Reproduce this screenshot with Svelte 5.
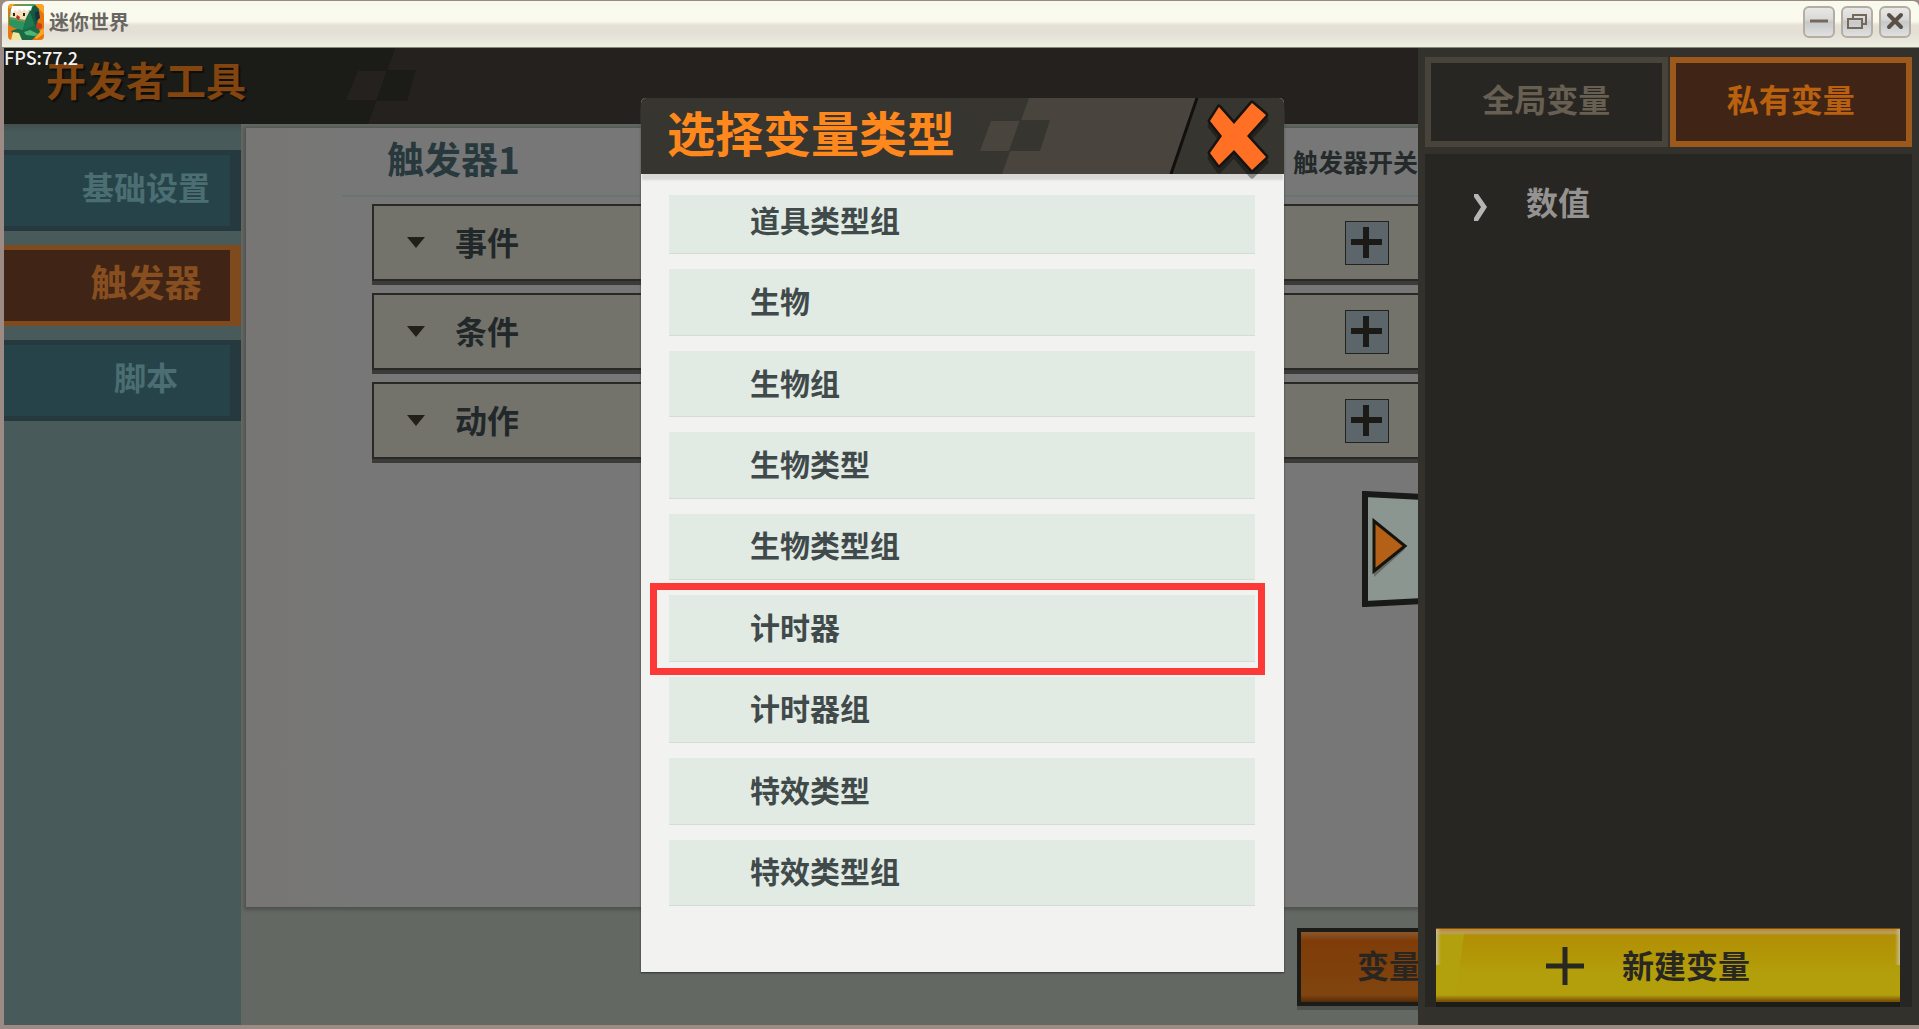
<script>
    let menu = [
        { label: '基础设置', active: false },
        { label: '触发器', active: true },
        { label: '脚本', active: false },
    ];

    let sections = ['事件', '条件', '动作'];

    let types = [
        '道具类型组',
        '生物',
        '生物组',
        '生物类型',
        '生物类型组',
        '计时器',
        '计时器组',
        '特效类型',
        '特效类型组',
    ];

    let marked = '计时器';
</script>

<div class="window">
    <header class="titlebar">
        <svg class="logo" viewBox="0 0 36 36" aria-hidden="true">
            <defs>
                <clipPath id="round"><rect width="36" height="36" rx="4" /></clipPath>
            </defs>
            <g clip-path="url(#round)">
                <rect width="36" height="36" fill="#e8760c" />
                <path d="M26 0h10v10zM0 0h7L1 5zM26 31l10-7v6l-8 5z" fill="#f9a52c" />
                <path d="M14 23l15-3 3 8-8 8H9l-6-9z" fill="#1c6a45" />
                <path d="M22 3l5-2 4 4-2 17-15 4z" fill="#15583f" />
                <path d="M4 4L6 1l21-1-4 5-6 12-16-2 1-9z" fill="#39a56d" />
                <path d="M3 5l20-1-6 12-15-3z" fill="#f6dfba" />
                <path d="M4 2h20l-1 5-2-2-2 3-3-3-2 3-2-3-3 3-2-2-3 3-1-3z" fill="#fff" />
                <path d="M1 15l16 3-2 8-9-2-5-3z" fill="#2a9562" />
                <path d="M17 18l5-10 5 14-12 4z" fill="#1d7a50" />
                <path d="M5 9h2v3H5zM15 9h2v3h-2z" fill="#2b2320" />
                <path d="M9 11l3 2-1 3-3-2z" fill="#c5281d" />
                <path d="M27 8l4-1 1 7-4 3z" fill="#152f45" />
                <circle cx="31" cy="22" r="3" fill="#cc3d1f" />
                <path d="M5 28l6 1 3 7H3z" fill="#efe4a0" />
                <path d="M16 28l6-2 8 4-3 2-9-1z" fill="#4db672" />
            </g>
        </svg>
        <h1>迷你世界</h1>
        <div class="window-buttons">
            <button aria-label="最小化">
                <svg viewBox="0 0 28 28"><path d="M5 13h18" stroke="#75685a" stroke-width="3" /></svg>
            </button>
            <button aria-label="还原">
                <svg viewBox="0 0 28 28" fill="none" stroke="#75685a">
                    <path d="M10 10V7h13v9h-4" stroke-width="2" />
                    <path d="M5 11h14v9H5z" stroke-width="2" />
                </svg>
            </button>
            <button aria-label="关闭">
                <svg viewBox="0 0 28 28"><path d="M8 7l12 12M20 7L8 19" stroke="#5a5048" stroke-width="4" stroke-linecap="round" /></svg>
            </button>
        </div>
    </header>

    <div class="game">
        <span class="fps">FPS:77.2</span>

        <div class="workspace">
            <div class="tool-header">
                <svg class="deco" viewBox="0 0 1070 76" aria-hidden="true">
                    <path d="M47 0H1070V76H20z" fill="#24211e" />
                    <path d="M10 23h29l-9 29H-2z" fill="#24211e" />
                    <path d="M39 22h29l-9 31H28z" fill="#1b1b17" />
                </svg>
                <h2>开发者工具</h2>
            </div>

            <div class="columns">
                <nav class="sidebar">
                    {#each menu as item}
                        <button class:active={item.active}>{item.label}</button>
                    {/each}
                </nav>

                <main>
                    <div class="sheet">
                        <div class="sheet-title">
                            <h3>触发器1</h3>
                            <span>触发器开关</span>
                        </div>
                        <div class="sections">
                            {#each sections as section}
                                <div class="section">
                                    <svg class="arrow" viewBox="0 0 18 11" aria-hidden="true"><path d="M0 0h18L9 11z" fill="#221f1a" /></svg>
                                    <span>{section}</span>
                                    <button class="add" aria-label="添加{section}">
                                        <svg viewBox="0 0 42 42"><path d="M5 20h31M20 5v31" stroke="#1b1a16" stroke-width="6" /></svg>
                                    </button>
                                </div>
                            {/each}
                        </div>
                        <button class="handle" aria-label="收起">
                            <svg viewBox="0 0 56 116">
                                <path d="M3 3L60 6V110L3 113z" fill="#8c9690" stroke="#191a17" stroke-width="6" />
                                <path d="M12 32L43 58L12 86z" fill="#3b403c" opacity="0.5" />
                                <path d="M12 30L43 55L12 80z" fill="#b46016" stroke="#15140f" stroke-width="3" />
                            </svg>
                        </button>
                    </div>
                    <div class="footer">
                        <button class="variables">变量</button>
                    </div>
                </main>
            </div>
        </div>

        <aside>
            <div class="tabs">
                <button>全局变量</button>
                <button class="active">私有变量</button>
            </div>
            <div class="variables-box">
                <button class="group">
                    <svg viewBox="0 0 14 28" aria-hidden="true"><path d="M0 1h4l9 13-9 14H0v-3l7-11L0 4z" fill="#b5b5b4" /></svg>
                    数值
                </button>
                <button class="create">
                    <svg viewBox="0 0 38 38" aria-hidden="true"><path d="M0 19h38M19 0v38" stroke="#292722" stroke-width="5" /></svg>
                    新建变量
                </button>
            </div>
        </aside>

        <div class="modal" role="dialog" aria-labelledby="modal-title">
            <div class="modal-header">
                <svg class="modal-deco" viewBox="0 0 304 76" aria-hidden="true">
                    <path d="M49 0H216L191 76H22z" fill="#49453e" />
                    <path d="M11 23h29L29 53H0z" fill="#49453e" />
                    <path d="M40 22h30L60 53H29z" fill="#373530" />
                    <path d="M217 0L191 76" stroke="#11100e" stroke-width="3" />
                </svg>
                <h2 id="modal-title">选择变量类型</h2>
                <button class="close" aria-label="关闭">
                    <svg viewBox="0 0 64 80">
                        <path d="M13 14L28 31L46 10L60 22L41 43L60 64L46 78L28 57L13 73L4 60L16 43L4 28z" fill="#000" opacity="0.35" stroke="#000" stroke-width="5" stroke-linejoin="round" />
                        <path d="M13 9L28 26L46 5L60 17L41 38L60 59L46 72L28 52L13 67L4 55L16 38L4 23z" fill="#ff6f24" stroke="#161410" stroke-width="5" stroke-linejoin="round" paint-order="stroke" />
                    </svg>
                </button>
            </div>
            <div class="modal-body">
                <div class="list">
                    {#each types as type}
                        <button class:marked={type === marked}>{type}</button>
                    {/each}
                </div>
            </div>
        </div>
    </div>
</div>

<style>
    :global(body) {
        margin: 0;
        background: #9b8b84;
    }

    .window {
        box-sizing: border-box;
        height: 100vh;
        display: flex;
        flex-direction: column;
        padding: 1px 0 4px;
        font-family: "Noto Sans CJK SC", "Noto Sans", sans-serif;
        overflow: hidden;
    }

    h1,
    h2,
    h3 {
        margin: 0;
    }

    button {
        box-sizing: border-box;
        border: 0;
        padding: 0;
        margin: 0;
        font: inherit;
        color: inherit;
        background: none;
    }

    svg {
        display: block;
    }

    /* Window title bar */
    .titlebar {
        flex: none;
        box-sizing: border-box;
        height: 47px;
        margin-left: 2px;
        padding: 0 8px 5px 6px;
        display: flex;
        align-items: center;
        gap: 5px;
        border-bottom: 1px solid #878b73;
        border-radius: 6px 6px 0 0;
        background: linear-gradient(#f9faee 0, #fafbee 20px, #e6e1d6 24px, #e3dfd4 32px, #eeeee2 46px);
    }

    .logo {
        width: 36px;
        height: 36px;
    }

    .titlebar h1 {
        flex: 1;
        font-size: 20px;
        line-height: 24px;
        font-weight: 700;
        color: #6a6763;
    }

    .window-buttons {
        display: flex;
        gap: 6px;
    }

    .window-buttons button {
        width: 32px;
        height: 32px;
        border: 2px solid #b5aca3;
        border-radius: 6px;
        background: linear-gradient(#e8e8e5, #d9d9d8 40%, #c6c8ca 50%, #e0e0df);
    }

    /* Game area */
    .game {
        position: relative;
        flex: 1;
        min-height: 0;
        display: flex;
        margin-left: 4px;
        background: #33312c;
    }

    .fps {
        position: absolute;
        left: 0;
        top: 0;
        z-index: 1;
        font: 500 18px/18px "Noto Sans CJK SC", "Noto Sans", sans-serif;
        color: #f4f4f4;
    }

    .workspace {
        flex: 1;
        min-width: 0;
        display: flex;
        flex-direction: column;
    }

    .tool-header {
        flex: none;
        position: relative;
        height: 76px;
        overflow: hidden;
        background: #1b1b17;
    }

    .deco {
        position: absolute;
        left: 344px;
        top: 0;
        width: 1070px;
        height: 76px;
        overflow: visible;
    }

    .tool-header h2 {
        position: relative;
        padding: 2px 0 0 42px;
        font-size: 40px;
        line-height: 58px;
        font-weight: 700;
        color: #82450f;
        text-shadow: 2px 2px 1px #0e0e0b;
    }

    .columns {
        flex: 1;
        min-height: 0;
        display: flex;
    }

    .sidebar {
        flex: none;
        width: 237px;
        padding-top: 26px;
        display: flex;
        flex-direction: column;
        gap: 14px;
        background: linear-gradient(#414f4d, #485a59 8px);
    }

    .sidebar button {
        height: 81px;
        padding-bottom: 10px;
        padding-left: 58px;
        border: solid #26393e;
        border-width: 5px 11px 5px 0;
        background: #27434a;
        font-size: 32px;
        line-height: 40px;
        font-weight: 700;
        text-align: center;
        color: #4b6e72;
    }

    .sidebar button.active {
        border-color: #7e4a1e;
        background: #402415;
        font-size: 37px;
        color: #874f20;
    }

    main {
        flex: 1;
        min-width: 0;
        display: flex;
        flex-direction: column;
        padding: 4px 0 0 5px;
        background: #636863;
    }

    .sheet {
        position: relative;
        flex: 1;
        min-height: 0;
        background: linear-gradient(90deg, #777674, #777 120px);
        box-shadow: 0 1px 3px 2px #505250;
    }

    .sheet-title {
        box-sizing: border-box;
        height: 69px;
        margin-left: 96px;
        padding: 0 0 8px 45px;
        display: flex;
        align-items: center;
        justify-content: space-between;
        border-bottom: 2px solid #687673;
        color: #27393c;
    }

    .sheet-title h3 {
        font-size: 37px;
        line-height: 58px;
        font-weight: 700;
    }

    .sheet-title span {
        padding-top: 6px;
        font-size: 25px;
        line-height: 36px;
        font-weight: 700;
        color: #24292a;
    }

    .sections {
        display: flex;
        flex-direction: column;
        gap: 12px;
        padding: 7px 0 0 126px;
    }

    .section {
        box-sizing: border-box;
        height: 77px;
        padding: 0 29px 0 33px;
        display: flex;
        align-items: center;
        border: 2px solid #292824;
        border-right: 0;
        background: #73736b;
        box-shadow: 0 4px #3b3b3a;
    }

    .arrow {
        width: 18px;
        height: 11px;
    }

    .section span {
        flex: 1;
        padding: 0 0 4px 30px;
        font-size: 32px;
        line-height: 40px;
        font-weight: 700;
        color: #22282a;
    }

    .add {
        width: 44px;
        height: 44px;
        border: 1px solid #22221f;
        background: #5c666a;
    }

    .handle {
        position: absolute;
        right: 0;
        top: 363px;
        width: 56px;
        height: 116px;
        overflow: hidden;
    }

    .footer {
        flex: none;
        display: flex;
        justify-content: flex-end;
        padding: 21px 0 19px;
        overflow: hidden;
    }

    .variables {
        height: 78px;
        width: 121px;
        padding: 0 0 6px 56px;
        border: 4px solid #1b1b18;
        border-right: 0;
        background: linear-gradient(#8a572b, #7f3c09 9px, #80440e 80%, #804410 90%, #542a09);
        box-shadow: 0 4px #4d524f;
        font-size: 32px;
        font-weight: 700;
        text-align: left;
        white-space: nowrap;
        color: #292621;
    }

    /* Variable drawer */
    aside {
        position: relative;
        flex: none;
        box-sizing: border-box;
        width: 501px;
        padding: 9px 7px 18px;
        display: flex;
        flex-direction: column;
        gap: 7px;
        background: #33312c;
    }

    .tabs {
        display: flex;
        gap: 2px;
    }

    .tabs button {
        flex: 1;
        height: 90px;
        padding-bottom: 8px;
        border: 6px solid #49443b;
        background: #282622;
        font-size: 32px;
        line-height: 40px;
        font-weight: 700;
        color: #676052;
    }

    .tabs button.active {
        border-color: #9d591c;
        background: #402415;
        color: #b9610f;
    }

    .variables-box {
        flex: 1;
        display: flex;
        flex-direction: column;
        justify-content: space-between;
        padding: 23px 12px 5px 11px;
        background: #282622;
    }

    .group {
        align-self: flex-start;
        display: flex;
        align-items: center;
        gap: 38px;
        padding-left: 38px;
        font-size: 32px;
        line-height: 48px;
        font-weight: 700;
        color: #949391;
    }

    .group svg {
        width: 14px;
        height: 28px;
        margin-top: 12px;
    }

    .create {
        height: 74px;
        display: flex;
        align-items: center;
        justify-content: center;
        gap: 38px;
        padding-right: 40px;
        padding-bottom: 4px;
        border-top: 1px solid #8b4c08;
        background:
            linear-gradient(90deg, #c6bd8a, transparent 5px, transparent calc(100% - 5px), #c6bd8a) top / 100% 36px no-repeat,
            linear-gradient(#b98a30, #b7a060 4px, transparent 6px),
            linear-gradient(transparent 66px, #7b5007 72px),
            linear-gradient(98deg, #b3a00d 28px, transparent 29px),
            linear-gradient(#b38c05, #b29807 30px, #b39f0c 44px);
        box-shadow: 0 5px #1b1b18;
        font-size: 32px;
        line-height: 40px;
        font-weight: 700;
        color: #292722;
    }

    .create svg {
        width: 38px;
        height: 38px;
        margin-top: 4px;
    }

    /* Type picker */
    .modal {
        position: absolute;
        left: 637px;
        right: 635px;
        top: 50px;
        bottom: 53px;
        display: flex;
        flex-direction: column;
        background: #f2f2f0;
        border-radius: 5px 5px 0 0;
        box-shadow: 0 1px 2px #333;
    }

    .modal-header {
        flex: none;
        height: 76px;
        padding: 0 14px 0 26px;
        display: flex;
        align-items: center;
        justify-content: space-between;
        border-radius: 5px 5px 0 0;
        background: #373530;
        box-shadow: 0 7px 2px -1px #d8d8d6;
    }

    .modal-deco {
        position: absolute;
        right: 0;
        top: 0;
        width: 304px;
        height: 76px;
    }

    .modal-header h2 {
        position: relative;
        padding-bottom: 10px;
        font-size: 48px;
        line-height: 60px;
        font-weight: 700;
        color: #ff881c;
    }

    .close {
        position: relative;
        width: 64px;
        height: 76px;
    }

    .close svg {
        width: 64px;
        height: 80px;
        overflow: visible;
    }

    .modal-body {
        flex: 1;
        min-height: 0;
        display: flex;
        padding: 21px 29px 66px 28px;
    }

    /* The list is scrolled down a little, so its first row is cut at the top */
    .list {
        flex: 1;
        display: flex;
        flex-direction: column;
        gap: 15px;
        clip-path: inset(0 -30px);
    }

    .list button {
        position: relative;
        flex: 1;
        padding: 0 0 4px 81px;
        border-bottom: 1px solid #d3ddd6;
        background: #e1ebe3;
        font-size: 30px;
        line-height: 40px;
        font-weight: 700;
        text-align: left;
        color: #414a4b;
    }

    .list button:first-child {
        margin-top: -7px;
    }

    .list button.marked::after {
        content: "";
        position: absolute;
        inset: -12px -10px -14px -19px;
        border: 7px solid #fc3937;
    }
</style>
